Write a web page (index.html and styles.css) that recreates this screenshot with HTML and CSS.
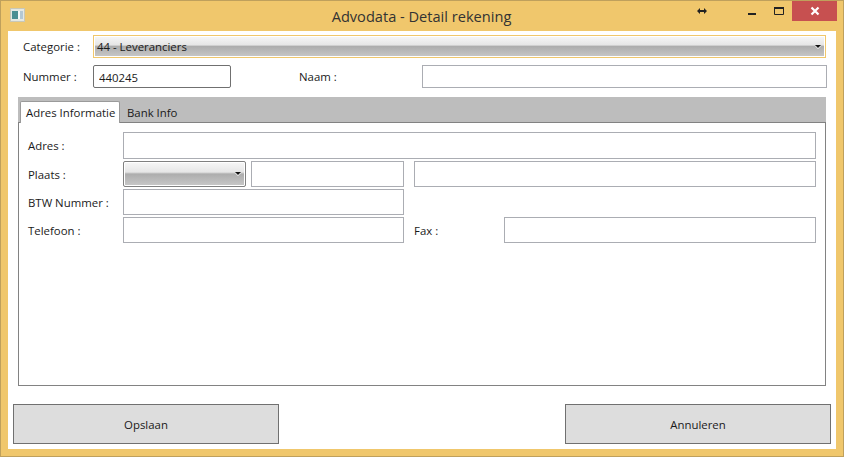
FILE: index.html
```html
<!DOCTYPE html>
<html lang="en">
<head>
    <meta charset="UTF-8">
    <meta name="viewport" content="width=device-width, initial-scale=1.0">
    <title>Advodata - Detail rekening</title>
    <link rel="stylesheet" href="styles.css">
</head>
<body>

    <div class="window">
        <div class="titleBar">
            <svg class="appIcon" width="15" height="14" viewBox="0 0 15 14">
                <rect x="0.5" y="0.5" width="14" height="13" fill="#e4e8e4" stroke="#c8c8b8"/>
                <rect x="2" y="3" width="6" height="8" fill="#4a8f94"/>
                <rect x="8" y="3" width="2" height="8" fill="#f4f8f8"/>
                <rect x="10" y="3" width="3" height="8" fill="#b4c8d4"/>
            </svg>
            <span class="windowTitle">Advodata - Detail rekening</span>
            <svg class="resizeCursor" width="10" height="6" viewBox="0 0 10 6">
                <path d="M0 3 L3 0 V2 H7 V0 L10 3 L7 6 V4 H3 V6 Z" fill="#222"/>
            </svg>
            <div class="windowButtons">
                <div class="winBtn">
                    <svg width="10" height="10" viewBox="0 0 10 10"><rect x="1" y="7" width="8" height="2" fill="#222"/></svg>
                </div>
                <div class="winBtn maxBtn">
                    <svg width="10" height="8" viewBox="0 0 10 8"><path d="M0.5 1 H9.5 V7.5 H0.5 Z" fill="none" stroke="#222"/><rect x="0" y="0" width="10" height="2" fill="#222"/></svg>
                </div>
                <div class="winBtn closeBtn">
                    <svg width="10" height="10" viewBox="0 0 10 10"><path d="M1.5 1.5 L8.5 8.5 M8.5 1.5 L1.5 8.5" stroke="#fff" stroke-width="2.2"/></svg>
                </div>
            </div>
        </div>

        <div class="content">
            <div class="topForm">
                <label>Categorie :</label>
                <div class="combo comboActive">
                    <span>44 - Leveranciers</span>
                    <i class="comboArrow"></i>
                </div>
            </div>
            <div class="numberRow">
                <label>Nummer :</label>
                <input type="text" class="field numberField" value="440245">
                <label class="nameLabel">Naam :</label>
                <input type="text" class="field nameField">
            </div>

            <div class="tabs">
                <div class="tabStrip">
                    <div class="tab tabActive">Adres Informatie</div>
                    <div class="tab">Bank Info</div>
                </div>
                <div class="tabPanel">
                    <div class="addressGrid">
                        <label>Adres :</label>
                        <input type="text" class="field wide">

                        <label>Plaats :</label>
                        <div class="cityCols">
                            <div class="combo comboSmall"><i class="comboArrow"></i></div>
                            <input type="text" class="field postcode">
                            <input type="text" class="field cityName">
                        </div>

                        <label>BTW Nummer :</label>
                        <input type="text" class="field vat">

                        <label>Telefoon :</label>
                        <div class="phoneCols">
                            <input type="text" class="field phone">
                            <label class="faxLabel">Fax :</label>
                            <input type="text" class="field fax">
                        </div>
                    </div>
                </div>
            </div>

            <div class="actions">
                <button>Opslaan</button>
                <button>Annuleren</button>
            </div>
        </div>
    </div>

</body>
</html>
```

FILE: styles.css
```css
* {
    box-sizing: border-box;
}

body {
    margin: 0;
    font-family: "Open Sans", "Noto Sans", sans-serif;
    font-size: 11.4px;
    color: #1a1a1a;
    overflow: hidden;
}

.window {
    position: relative;
    width: 844px;
    height: 457px;
    display: flex;
    flex-direction: column;
    background-color: #F0C76C;
    border: 1px solid #BFA05C;
}

.titleBar {
    height: 30px;
    flex: none;
    position: relative;
    display: flex;
    justify-content: center;
    align-items: center;
}

.appIcon {
    position: absolute;
    left: 9px;
    top: 7px;
}

.windowTitle {
    font-size: 14.6px;
    color: #333;
    margin-left: -1px;
}

.resizeCursor {
    position: absolute;
    left: 696px;
    top: 7px;
}

.windowButtons {
    position: absolute;
    right: 6px;
    top: 0;
    display: flex;
}

.winBtn {
    width: 30px;
    height: 20px;
    display: flex;
    align-items: center;
    justify-content: center;
}

.maxBtn {
    width: 24px;
}

.closeBtn {
    width: 45px;
    margin-left: 1px;
    background-color: #C75050;
}

.content {
    flex: 1;
    margin: 0 7px 7px 7px;
    background-color: #fff;
    padding: 4px 5px 5px 5px;
    display: flex;
    flex-direction: column;
}

label {
    white-space: nowrap;
}

.field {
    height: 23px;
    border: 1px solid #ABADB3;
    background-color: #fff;
    font: inherit;
    color: inherit;
    padding: 2px 5px 0;
    margin: 0;
    border-radius: 0;
    outline: none;
}

.topForm {
    display: flex;
    align-items: center;
    padding-left: 10px;
    height: 23px;
}

.topForm label {
    width: 70px;
}

.combo {
    position: relative;
    height: 23px;
    border: 1px solid #F0C76C;
    box-shadow: inset 0 0 0 1px #fff;
    background: linear-gradient(#f7f7f7 0%, #e6e6e6 42%, #adadad 50%, #c8c8c8 100%);
    padding: 1px 3px;
    display: flex;
    align-items: center;
}

.comboActive {
    width: 733px;
}

.comboArrow {
    position: absolute;
    right: 4px;
    top: 9px;
    width: 0;
    height: 0;
    border-left: 3px solid transparent;
    border-right: 3px solid transparent;
    border-top: 3px solid #111;
    filter: drop-shadow(0 1px 0 #fff);
}

.numberRow {
    display: flex;
    align-items: center;
    margin-top: 7px;
    padding-left: 10px;
}

.numberRow > label:first-child {
    width: 70px;
}

.numberField {
    width: 138px;
    border-radius: 2px;
    border-color: #707070;
}

.nameLabel {
    margin-left: 68px;
    width: 123px;
}

.nameField {
    width: 405px;
}

.tabs {
    margin: 9px 5px 0 5px;
    width: 808px;
    height: 289px;
    display: flex;
    flex-direction: column;
}

.tabStrip {
    height: 25px;
    flex: none;
    background-color: #BDBDBD;
    padding: 4px 0 0 2px;
    display: flex;
}

.tab {
    padding: 4px 6px 0 7px;
    height: 22px;
    position: relative;
    z-index: 1;
}

.tabActive {
    width: 100px;
    background-color: #fff;
    border: 1px solid #9A9A9A;
    border-bottom: none;
    border-radius: 2px 2px 0 0;
    padding: 3px 0 0 5px;
    white-space: nowrap;
}

.tabPanel {
    flex: 1;
    border: 1px solid #828282;
    padding: 9px 9px 0 9px;
}

.addressGrid {
    display: grid;
    grid-template-columns: 95px 693px;
    grid-template-rows: 27px 26px 26px 26px;
    row-gap: 2px;
    align-items: center;
}

.addressGrid .field {
    height: 100%;
}

.wide {
    width: 693px;
}

.cityCols,
.phoneCols {
    display: flex;
    height: 100%;
    align-items: stretch;
}

.comboSmall {
    width: 123px;
    height: 26px;
    border-color: #808080;
    border-radius: 2px;
}

.comboSmall .comboArrow {
    top: 10px;
}

.postcode {
    width: 153px;
    margin-left: 5px;
}

.cityName {
    width: 402px;
    margin-left: 10px;
}

.vat {
    width: 281px;
}

.phone {
    width: 281px;
}

.faxLabel {
    width: 100px;
    padding-left: 10px;
    align-self: center;
}

.fax {
    width: 312px;
}

.actions {
    margin-top: 18px;
    display: flex;
    justify-content: space-between;
}

button {
    width: 266px;
    height: 40px;
    background-color: #DDDDDD;
    border: 1px solid #707070;
    font: inherit;
    color: inherit;
    padding: 0;
}
```
